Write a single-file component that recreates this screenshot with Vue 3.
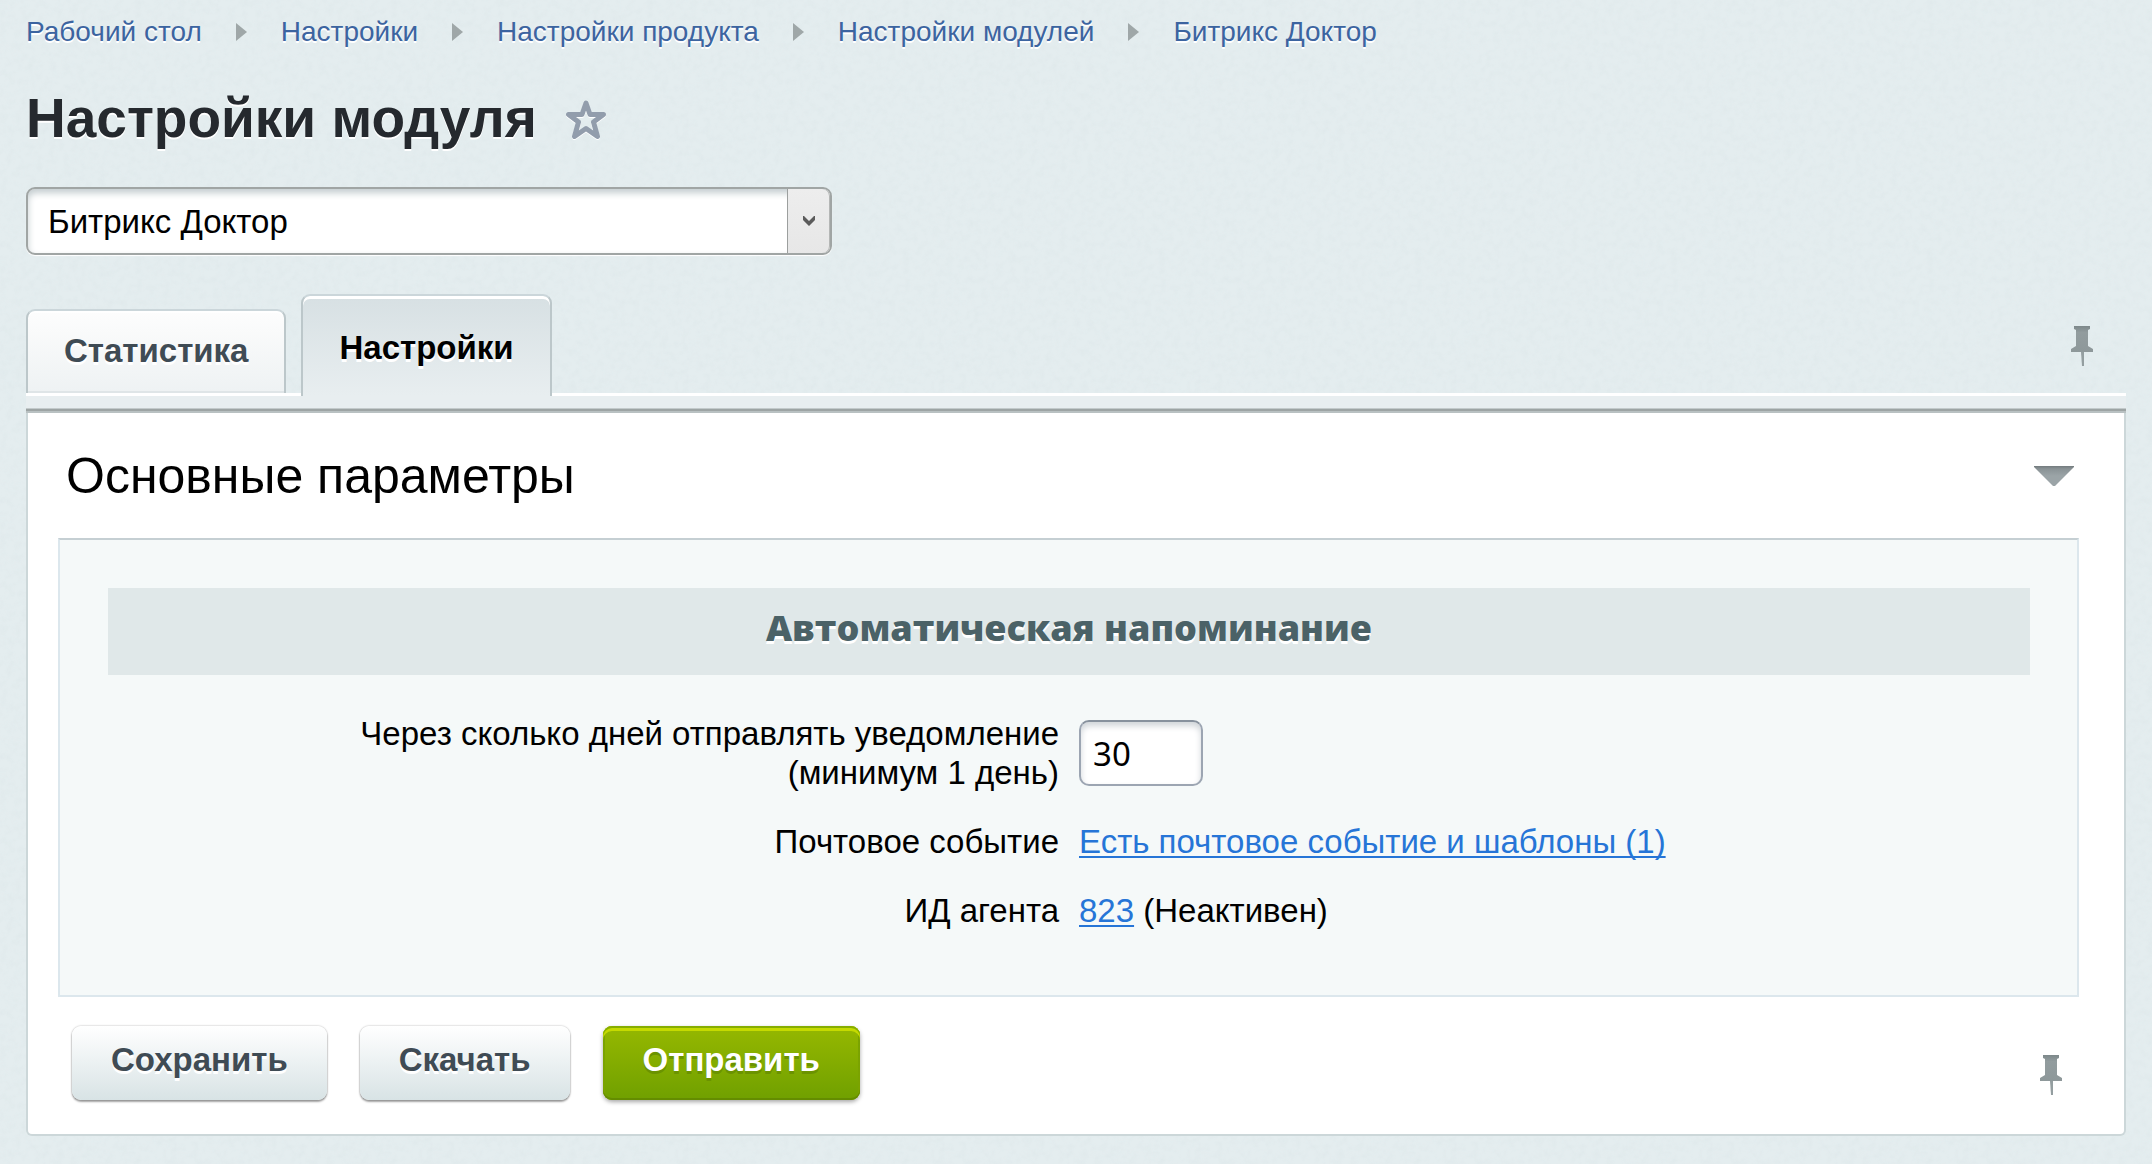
<script setup>
import { ref } from 'vue'

const crumbs = ['Рабочий стол', 'Настройки', 'Настройки продукта', 'Настройки модулей', 'Битрикс Доктор']
const tabs = ['Статистика', 'Настройки']
const activeTab = ref('Настройки')
const moduleName = ref('Битрикс Доктор')
const days = ref('30')
const open = ref(true)
</script>

<template>
  <div class="page">
    <svg class="defs" width="0" height="0" aria-hidden="true">
      <defs>
        <linearGradient id="pin-fill" x1="0" y1="0" x2="0" y2="1">
          <stop offset="0" stop-color="#7d888a" />
          <stop offset="0.25" stop-color="#929c9e" />
          <stop offset="1" stop-color="#8e989a" />
        </linearGradient>
        <linearGradient id="fold-fill" x1="0" y1="0" x2="0" y2="1">
          <stop offset="0" stop-color="#737b7e" />
          <stop offset="0.15" stop-color="#8a9396" />
          <stop offset="0.5" stop-color="#9ba4a7" />
          <stop offset="1" stop-color="#9ba4a7" />
        </linearGradient>
        <symbol id="pin" viewBox="0 0 24 42">
          <path d="M4 1H20V4L18 5V21L23 24V27H1V24L6 21V5L4 4Z" fill="url(#pin-fill)" />
          <path d="M11 27H14V41H12Z" fill="#949ea0" />
        </symbol>
      </defs>
    </svg>

    <nav class="crumbs" aria-label="Навигация">
      <template v-for="(crumb, i) in crumbs" :key="crumb">
        <svg v-if="i" class="crumb-arrow" viewBox="0 0 11 18" aria-hidden="true">
          <path d="M0 0L11 9L0 18Z" fill="#9fa7a8" />
        </svg>
        <a href="#">{{ crumb }}</a>
      </template>
    </nav>

    <header class="title-row">
      <h1>Настройки модуля</h1>
      <button class="icon-btn" type="button" aria-label="Добавить в избранное">
        <svg class="star" viewBox="0 -4 44 46" aria-hidden="true">
          <path
            d="M22 4L26 15.500H39.500L29.500 23L33.500 37.500L22 29.500L10.500 37.500L14.500 23L4.500 15.500H18Z"
            fill="none" stroke="#929dac" stroke-width="5" stroke-linejoin="round" />
        </svg>
      </button>
    </header>

    <div class="select-wrap">
      <select v-model="moduleName" aria-label="Модуль">
        <option>Битрикс Доктор</option>
      </select>
      <span class="select-arrow">
        <svg viewBox="0 0 12 10" aria-hidden="true">
          <path d="M0 0H1L6 5L11 0H12V4L6 10L0 4Z" fill="#5b5b5b" />
        </svg>
      </span>
    </div>

    <div class="tab-row">
      <div class="tabs" role="tablist">
        <button
          v-for="tab in tabs" :key="tab" type="button" role="tab"
          :class="['tab', { active: tab === activeTab }]"
          :aria-selected="tab === activeTab" @click="activeTab = tab">{{ tab }}</button>
      </div>
      <button class="icon-btn pin-top" type="button" aria-label="Закрепить вкладки">
        <svg class="pin" aria-hidden="true"><use href="#pin" /></svg>
      </button>
    </div>
    <div class="strip"></div>

    <form class="panel" @submit.prevent>
      <div class="panel-head">
        <h2>Основные параметры</h2>
        <button class="icon-btn" type="button" aria-label="Свернуть" @click="open = !open">
          <svg class="fold" viewBox="0 0 40 20" aria-hidden="true">
            <path d="M0 0H40V1L21 20H19L0 1Z" fill="url(#fold-fill)" />
          </svg>
        </button>
      </div>

      <section v-show="open" class="box">
        <h3>Автоматическая напоминание</h3>
        <table class="params">
          <tbody>
            <tr>
              <th scope="row"><label for="days">Через сколько дней отправлять уведомление (минимум 1 день)</label></th>
              <td><input id="days" v-model="days" type="text"></td>
            </tr>
            <tr>
              <th scope="row">Почтовое событие</th>
              <td><a href="#">Есть почтовое событие и шаблоны (1)</a></td>
            </tr>
            <tr>
              <th scope="row">ИД агента</th>
              <td><a href="#">823</a> (Неактивен)</td>
            </tr>
          </tbody>
        </table>
      </section>

      <footer class="actions">
        <button class="btn" type="submit">Сохранить</button>
        <button class="btn" type="button">Скачать</button>
        <button class="btn primary" type="button">Отправить</button>
        <button class="icon-btn pin-bottom" type="button" aria-label="Закрепить кнопки">
          <svg class="pin" aria-hidden="true"><use href="#pin" /></svg>
        </button>
      </footer>
    </form>
  </div>
</template>

<style>
body {
  background: #e3ecee;
}
</style>

<style scoped>
.page {
  box-sizing: border-box;
  min-height: 100vh;
  padding: 16px 26px 27px;
  background-color: #e4edef;
  background-image: url("data:image/svg+xml,%3Csvg xmlns='http://www.w3.org/2000/svg' width='256' height='256'%3E%3Cfilter id='n' x='0' y='0' width='100%25' height='100%25'%3E%3CfeTurbulence type='fractalNoise' baseFrequency='.14' numOctaves='2' stitchTiles='stitch'/%3E%3CfeColorMatrix values='0 0 0 0 .6 0 0 0 0 .68 0 0 0 0 .7 1 0 0 0 -.38'/%3E%3C/filter%3E%3Crect width='256' height='256' filter='url(%23n)' opacity='.3'/%3E%3C/svg%3E");
  color: #000;
  font: 33px/39px "Liberation Sans", Arial, sans-serif;
}
.defs {
  position: absolute;
}
.icon-btn {
  display: flex;
  padding: 0;
  border: 0;
  background: none;
  cursor: pointer;
}

.crumbs {
  display: flex;
  flex-wrap: wrap;
  align-items: center;
  font-size: 28px;
  line-height: 32px;
}
.crumbs a {
  color: #3c64a0;
  text-decoration: none;
  text-shadow: 0 2px #fff;
}
.crumb-arrow {
  width: 11px;
  height: 18px;
  margin: 0 34px;
}

.title-row {
  display: flex;
  align-items: center;
  gap: 27px;
  margin-top: 38px;
}
h1 {
  margin: 0;
  color: #25292e;
  font-size: 55px;
  line-height: 64px;
  text-shadow: 0 2px #fff;
}
.star {
  width: 44px;
  height: 46px;
  filter: drop-shadow(0 1px #fff);
}

.select-wrap {
  display: grid;
  width: 806px;
  max-width: 100%;
  margin-top: 37px;
}
.select-wrap > * {
  grid-area: 1 / 1;
}
select {
  width: 100%;
  height: 68px;
  padding: 0 60px 0 20px;
  border: 2px solid #a0a5a4;
  border-radius: 9px;
  appearance: none;
  background: #fff;
  box-shadow: inset 0 4px 7px #c3cccf, 0 1px 1px #fff;
  color: #000;
  font: inherit;
}
.select-arrow {
  display: flex;
  align-items: center;
  justify-content: center;
  justify-self: end;
  width: 42px;
  margin: 2px;
  border-left: 1px solid #9c9f9e;
  border-radius: 0 7px 7px 0;
  background: linear-gradient(#ededed, #e7e7e7);
  box-shadow: inset -1px 0 #b4b6b5;
  pointer-events: none;
}
.select-arrow svg {
  width: 12px;
  height: 10px;
}

.tab-row {
  display: flex;
  align-items: flex-end;
  justify-content: space-between;
  margin-top: 39px;
}
.tabs {
  display: flex;
  align-items: flex-end;
  gap: 15px;
}
.tab {
  padding: 21px 36px 23px;
  border: 2px solid #bcc7ca;
  border-top-color: #cbd6da;
  border-bottom: 0;
  border-radius: 9px 9px 0 0;
  background: linear-gradient(#fdfdfd, #eef2f3);
  box-shadow: inset 0 2px #fff, inset 0 -2px #dfe5e7;
  color: #3f4b54;
  font: bold 33px/38px "Liberation Sans", Arial, sans-serif;
  text-shadow: 0 3px #fff;
}
.tab.active {
  position: relative;
  z-index: 1;
  margin-bottom: -3px;
  padding-top: 33px;
  padding-bottom: 29px;
  background: linear-gradient(#d7e0e3, #e8eef0);
  box-shadow: inset 0 3px #fff;
  color: #000;
}
.pin {
  width: 24px;
  height: 42px;
}
.pin-top {
  margin: 0 32px 26px 0;
}
.strip {
  height: 12px;
  border-top: 3px solid #fff;
  border-bottom: 5px solid;
  border-image: linear-gradient(#fff 3px, #e8eef0 3px, #e8eef0 15px, #c3cacb 15px, #c3cacb 16px, #9da4a4 16px, #9da4a4 18px, #b9c1c2 18px) 3 0 5;
  background: #e8eef0;
}

.panel {
  padding: 34px 45px 34px 30px;
  border: 2px solid #ccd7d9;
  border-top: 0;
  border-radius: 0 0 6px 6px;
  background: #fff;
}
.panel-head {
  display: flex;
  align-items: center;
  justify-content: space-between;
  padding: 0 5px 0 8px;
}
h2 {
  margin: 0;
  font-size: 50px;
  font-weight: normal;
  line-height: 58px;
}
.fold {
  width: 40px;
  height: 20px;
}

.box {
  margin-top: 33px;
  padding: 48px 47px 50px 48px;
  border: 2px solid #dce7ed;
  border-top-color: #c5cfd3;
  background: #f5f9f9;
}
h3 {
  margin: 0;
  padding: 20px 0 27px;
  background: #e0e8e9;
  color: #4b6267;
  font: 800 36px/40px "Open Sans", "Arial Black", sans-serif;
  text-align: center;
  text-shadow: 0 3px #fff;
}
.params {
  width: 100%;
  margin-top: 24px;
  border-collapse: collapse;
  table-layout: fixed;
}
.params th,
.params td {
  box-sizing: border-box;
  width: 50%;
  padding: 15px 10px;
  font-weight: normal;
  text-align: left;
}
.params th {
  padding-left: 100px;
  text-align: right;
}
.params td a {
  color: #2675d7;
  text-decoration: underline 2px;
  text-decoration-skip-ink: none;
  text-underline-offset: 3px;
}
.params td:has(input) {
  padding-block: 0;
}
.params input {
  display: block;
  box-sizing: border-box;
  width: 124px;
  height: 66px;
  padding: 0 12px;
  border: 2px solid #9ca5b2;
  border-top-color: #87919d;
  border-radius: 10px;
  background: #fff;
  box-shadow: inset 0 4px 6px #d0d5d9;
  color: #000;
  font: 33px/39px "Noto Sans", Tahoma, sans-serif;
}

.actions {
  display: flex;
  flex-wrap: wrap;
  align-items: flex-start;
  gap: 33px;
  margin: 29px 0 0 14px;
}
.btn {
  padding: 15px 39px 21px;
  border: 0;
  border-radius: 9px;
  background: linear-gradient(#fff, #d8e3e5);
  box-shadow: 0 0 2px rgba(0, 0, 0, 0.35), 0 2px 2px rgba(0, 0, 0, 0.35);
  color: #3f4b54;
  font: bold 33px/38px "Liberation Sans", Arial, sans-serif;
  text-shadow: 0 3px #fff;
  cursor: pointer;
}
.btn.primary {
  padding: 15px 40px 21px;
  background: linear-gradient(#96b800, #70a000);
  box-shadow: inset 0 2px #86ad00, inset 0 5px #c5da00, inset 0 -2px #648c00, inset 0 0 0 2px #7ba300, 0 2px 4px rgba(0, 0, 0, 0.35);
  color: #fff;
  text-shadow: 0 3px #6b9300;
}
.pin-bottom {
  align-self: flex-end;
  margin: 0 16px 4px auto;
}
</style>
